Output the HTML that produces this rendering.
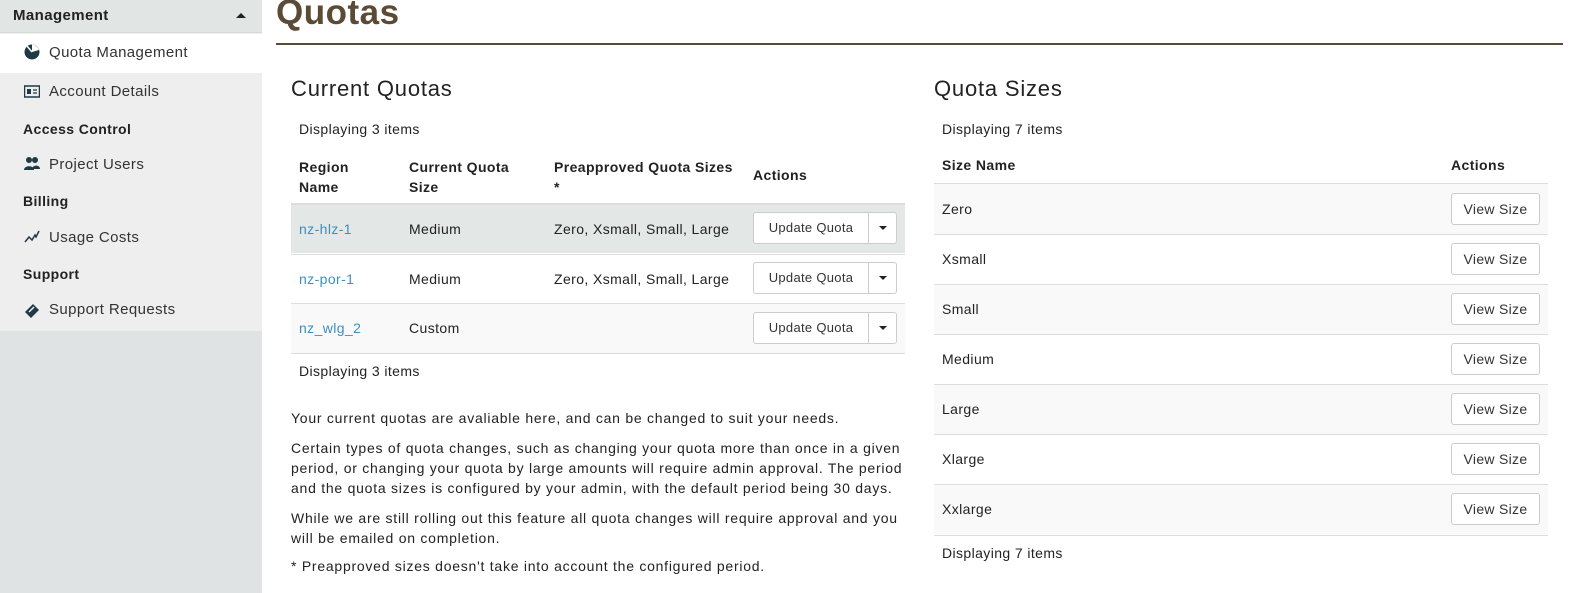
<!DOCTYPE html>
<html><head><meta charset="utf-8"><style>
*{box-sizing:border-box;margin:0;padding:0}
body{width:1596px;height:593px;background:#fff;font-family:"Liberation Sans","DejaVu Sans",sans-serif;color:#222;position:relative;overflow:hidden;font-size:14px;letter-spacing:0.4px}
.a{position:absolute;white-space:nowrap}
.side{position:absolute;left:0;top:0;width:262px;height:593px;background:#dfe3e4}
.sideIn{position:absolute;left:0;top:0;width:262px;height:331px;background:#efeeee}
.hdr{position:absolute;left:0;top:0;width:262px;height:33px;background:#e1e5e4;border-bottom:1px solid #d4d8d8}
.act{position:absolute;left:0;top:34px;width:262px;height:39px;background:#fff}
.nav{font-size:15px;color:#333}
.sec{font-size:14px;font-weight:bold;color:#222}
.ico{position:absolute;left:24px;width:16px;height:16px}
.row{position:absolute;height:50px;border-top:1px solid #ddd}
.btn{position:absolute;height:32px;border:1px solid #ccc;border-radius:3px;background:#fff;font-size:13px;color:#333;display:flex;align-items:center;letter-spacing:0.3px}
.lnk{color:#3d8fbf}
p.t{position:absolute;left:291px;font-size:14px;color:#222;line-height:20px;width:625px;white-space:normal;letter-spacing:0.75px}
</style></head><body>
<div class="side"><div class="sideIn"></div>
<div class="hdr"></div>
<div class="a sec" style="left:13px;top:7px;font-size:15px">Management</div>
<div class="a" style="left:236px;top:13px;width:0;height:0;border-left:5px solid transparent;border-right:5px solid transparent;border-bottom:5px solid #222"></div>
<div class="act"></div>
<svg class="ico" style="top:44px" viewBox="0 0 16 16"><circle cx="8" cy="8" r="7.5" fill="#1d3a46"/><path d="M8 8 L8 0.5 A7.5 7.5 0 0 1 15 6 Z" fill="#fff"/><path d="M8 8 L3 2 " stroke="#fff" stroke-width="1.5"/></svg>
<div class="a nav" style="left:49px;top:44px">Quota Management</div>
<svg class="ico" style="top:84px" viewBox="0 0 16 16"><rect x="0.5" y="2" width="15" height="11" fill="none" stroke="#1d3a46" stroke-width="1.5"/><rect x="3" y="5" width="4" height="5" fill="#1d3a46"/><path d="M9 6h4M9 9h4" stroke="#1d3a46" stroke-width="1.3"/></svg>
<div class="a nav" style="left:49px;top:83px">Account Details</div>
<div class="a sec" style="left:23px;top:121px">Access Control</div>
<svg class="ico" style="top:156px" viewBox="0 0 16 16"><circle cx="5" cy="4" r="3" fill="#1d3a46"/><circle cx="11" cy="4" r="3" fill="#1d3a46"/><path d="M0 14c0-5 10-5 10 0zM8 13c0-4 8-5 8 0z" fill="#1d3a46"/></svg>
<div class="a nav" style="left:49px;top:156px">Project Users</div>
<div class="a sec" style="left:23px;top:193px">Billing</div>
<svg class="ico" style="top:229px" viewBox="0 0 16 16"><path d="M1 13l4-5 3 3 3-5 1 2 3-6" fill="none" stroke="#1d3a46" stroke-width="1.5"/></svg>
<div class="a nav" style="left:49px;top:229px">Usage Costs</div>
<div class="a sec" style="left:23px;top:266px">Support</div>
<svg class="ico" style="top:302px" viewBox="0 0 16 16"><path d="M1 10L9 2l6 6-8 8z" fill="#1d3a46"/><path d="M5 10l5-5" stroke="#efeeee" stroke-width="1.5"/></svg>
<div class="a nav" style="left:49px;top:301px">Support Requests</div>
</div>

<div class="a" style="left:276px;top:-7px;font-size:35px;font-weight:bold;color:#5b4a35;letter-spacing:0.5px">Quotas</div>
<div class="a" style="left:276px;top:43px;width:1287px;height:2px;background:#5b4a35"></div>

<div class="a" style="left:291px;top:76px;font-size:22px;color:#222;letter-spacing:0.8px">Current Quotas</div>
<div class="a" style="left:299px;top:121px">Displaying 3 items</div>
<div class="a" style="left:299px;top:157px;font-weight:bold;line-height:20px">Region<br>Name</div>
<div class="a" style="left:409px;top:157px;font-weight:bold;line-height:20px">Current Quota<br>Size</div>
<div class="a" style="left:554px;top:157px;font-weight:bold;line-height:20px">Preapproved Quota Sizes<br>*</div>
<div class="a" style="left:753px;top:167px;font-weight:bold">Actions</div>

<div class="row" style="left:291px;top:203px;width:614px;background:#e3e7e6;border-top:2px solid #ddd"></div>
<div class="row" style="left:291px;top:254px;width:614px;background:#fff"></div>
<div class="row" style="left:291px;top:303px;width:614px;background:#f9f9f9"></div>
<div class="a" style="left:291px;top:353px;width:614px;height:1px;background:#ddd"></div>

<div class="a lnk" style="left:299px;top:221px">nz-hlz-1</div>
<div class="a" style="left:409px;top:221px">Medium</div>
<div class="a" style="left:554px;top:221px">Zero, Xsmall, Small, Large</div>
<div class="a lnk" style="left:299px;top:271px">nz-por-1</div>
<div class="a" style="left:409px;top:271px">Medium</div>
<div class="a" style="left:554px;top:271px">Zero, Xsmall, Small, Large</div>
<div class="a lnk" style="left:299px;top:320px">nz_wlg_2</div>
<div class="a" style="left:409px;top:320px">Custom</div>

<div class="btn" style="left:753px;top:212px;width:144px"><span style="width:115px;text-align:center;border-right:1px solid #ccc;line-height:30px">Update Quota</span><span style="margin-left:10px;border-left:4px solid transparent;border-right:4px solid transparent;border-top:4px solid #222"></span></div>
<div class="btn" style="left:753px;top:262px;width:144px"><span style="width:115px;text-align:center;border-right:1px solid #ccc;line-height:30px">Update Quota</span><span style="margin-left:10px;border-left:4px solid transparent;border-right:4px solid transparent;border-top:4px solid #222"></span></div>
<div class="btn" style="left:753px;top:312px;width:144px"><span style="width:115px;text-align:center;border-right:1px solid #ccc;line-height:30px">Update Quota</span><span style="margin-left:10px;border-left:4px solid transparent;border-right:4px solid transparent;border-top:4px solid #222"></span></div>

<div class="a" style="left:299px;top:363px">Displaying 3 items</div>
<p class="t" style="top:408px">Your current quotas are avaliable here, and can be changed to suit your needs.</p>
<p class="t" style="top:438px">Certain types of quota changes, such as changing your quota more than once in a given period, or changing your quota by large amounts will require admin approval. The period and the quota sizes is configured by your admin, with the default period being 30 days.</p>
<p class="t" style="top:508px">While we are still rolling out this feature all quota changes will require approval and you will be emailed on completion.</p>
<p class="t" style="top:556px">* Preapproved sizes doesn't take into account the configured period.</p>

<div class="a" style="left:934px;top:76px;font-size:22px;letter-spacing:0.8px">Quota Sizes</div>
<div class="a" style="left:942px;top:121px">Displaying 7 items</div>
<div class="a" style="left:942px;top:157px;font-weight:bold">Size Name</div>
<div class="a" style="left:1451px;top:157px;font-weight:bold">Actions</div>
<div class="a" style="left:934px;top:183px;width:614px;height:2px;background:#ddd"></div>
<div class="row" style="left:934px;top:184px;width:614px;background:#f9f9f9;border:none"></div>
<div class="row" style="left:934px;top:234px;width:614px"></div>
<div class="row" style="left:934px;top:284px;width:614px;background:#f9f9f9"></div>
<div class="row" style="left:934px;top:334px;width:614px"></div>
<div class="row" style="left:934px;top:384px;width:614px;background:#f9f9f9"></div>
<div class="row" style="left:934px;top:434px;width:614px"></div>
<div class="row" style="left:934px;top:484px;width:614px;background:#f9f9f9"></div>
<div class="a" style="left:934px;top:535px;width:614px;height:1px;background:#ddd"></div>

<div class="a" style="left:942px;top:201px">Zero</div>
<div class="a" style="left:942px;top:251px">Xsmall</div>
<div class="a" style="left:942px;top:301px">Small</div>
<div class="a" style="left:942px;top:351px">Medium</div>
<div class="a" style="left:942px;top:401px">Large</div>
<div class="a" style="left:942px;top:451px">Xlarge</div>
<div class="a" style="left:942px;top:501px">Xxlarge</div>

<div class="btn" style="left:1451px;top:193px;width:89px;justify-content:center;font-size:14px">View Size</div>
<div class="btn" style="left:1451px;top:243px;width:89px;justify-content:center;font-size:14px">View Size</div>
<div class="btn" style="left:1451px;top:293px;width:89px;justify-content:center;font-size:14px">View Size</div>
<div class="btn" style="left:1451px;top:343px;width:89px;justify-content:center;font-size:14px">View Size</div>
<div class="btn" style="left:1451px;top:393px;width:89px;justify-content:center;font-size:14px">View Size</div>
<div class="btn" style="left:1451px;top:443px;width:89px;justify-content:center;font-size:14px">View Size</div>
<div class="btn" style="left:1451px;top:493px;width:89px;justify-content:center;font-size:14px">View Size</div>
<div class="a" style="left:942px;top:545px">Displaying 7 items</div>
</body></html>
